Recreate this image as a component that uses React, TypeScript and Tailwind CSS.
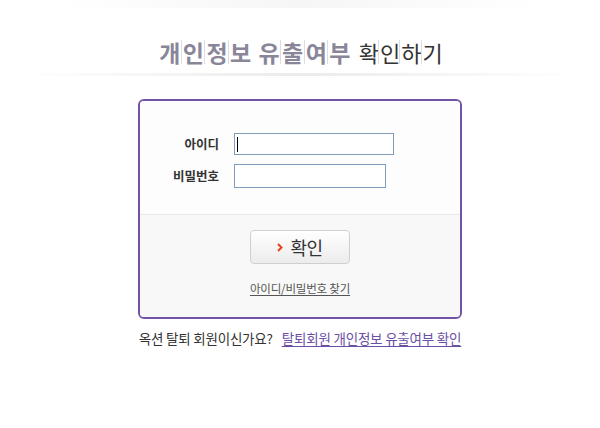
import { Fragment } from "react";

function Sliced({ text, className }: { text: string; className: string }) {
  const chars = text.split("");
  return (
    <span className={`inline-flex items-center ${className}`}>
      {chars.map((c, i) => (
        <Fragment key={i}>
          <span>{c}</span>
          {i < chars.length - 1 && <span className="mx-[1px] inline-block h-[24px] w-px bg-[#dcdce2]" />}
        </Fragment>
      ))}
    </span>
  );
}

export default function App() {
  return (
    <div className="flex h-[428px] w-[600px] flex-col items-center bg-white font-['Noto_Sans_CJK_KR',sans-serif]">
      <div className="h-[8px] w-[480px] bg-gradient-to-r from-transparent via-[#f6f6f6] to-transparent" />

      {/* title */}
      <h1 className="mt-[28px] flex h-[32px] items-center gap-[9px] leading-[32px]">
        <span className="flex items-center gap-[8px] text-[23px] font-bold text-[#8a8699]">
          <Sliced text="개인정보" className="tracking-[-0.6px]" />
          <Sliced text="유출여부" className="tracking-[-0.6px]" />
        </span>
        <Sliced text="확인하기" className="text-[22px] font-normal tracking-[-2px] text-[#333]" />
      </h1>
      <div className="mt-[5px] h-[3px] w-[560px] bg-gradient-to-r from-transparent via-[#ebebeb] to-transparent" />

      {/* login box */}
      <div className="mt-[23px] flex h-[220px] w-[324px] flex-col overflow-hidden rounded-[6px] border-2 border-[#7452a8] bg-white">
        <div className="flex h-[113px] flex-col gap-[9px] bg-[#fdfdfd] pt-[32px]">
          <div className="flex items-center">
            <label className="w-[79px] text-right text-[12.5px] font-bold leading-[22px] text-[#333]">아이디</label>
            <div className="ml-[15px] flex h-[22px] w-[160px] items-center border border-[#7f9db9] bg-white pl-[2px]">
              <span className="h-[15px] w-px bg-black" />
            </div>
          </div>
          <div className="flex items-center">
            <label className="w-[79px] text-right text-[12.5px] font-bold leading-[24px] text-[#333]">비밀번호</label>
            <div className="ml-[15px] h-[24px] w-[152px] border border-[#7f9db9] bg-white" />
          </div>
        </div>
        <div className="flex flex-1 flex-col items-center border-t border-[#e8e8e8] bg-[#f8f8f8] pt-[15px]">
          <button className="flex h-[34px] w-[100px] items-center justify-center gap-[7px] rounded-[4px] border border-[#cfcfcf] bg-gradient-to-b from-white to-[#ececec]">
            <svg width="6" height="9" viewBox="0 0 6 9">
              <path d="M1 1 L4.5 4.5 L1 8" fill="none" stroke="#e8421c" strokeWidth="2" />
            </svg>
            <span className="text-[18px] font-normal leading-none tracking-[-0.5px] text-[#333]">확인</span>
          </button>
          <a className="mt-[16px] text-[11.5px] leading-[16px] tracking-[-0.2px] text-[#555] underline underline-offset-2">
            아이디/비밀번호 찾기
          </a>
        </div>
      </div>

      {/* bottom */}
      <p className="mt-[9px] flex items-center gap-[9px] text-[13.5px] leading-[20px] tracking-[-0.2px]">
        <span className="text-[#333]">옥션 탈퇴 회원이신가요?</span>
        <a className="text-[#6b4fa6] underline underline-offset-2">탈퇴회원 개인정보 유출여부 확인</a>
      </p>
    </div>
  );
}
